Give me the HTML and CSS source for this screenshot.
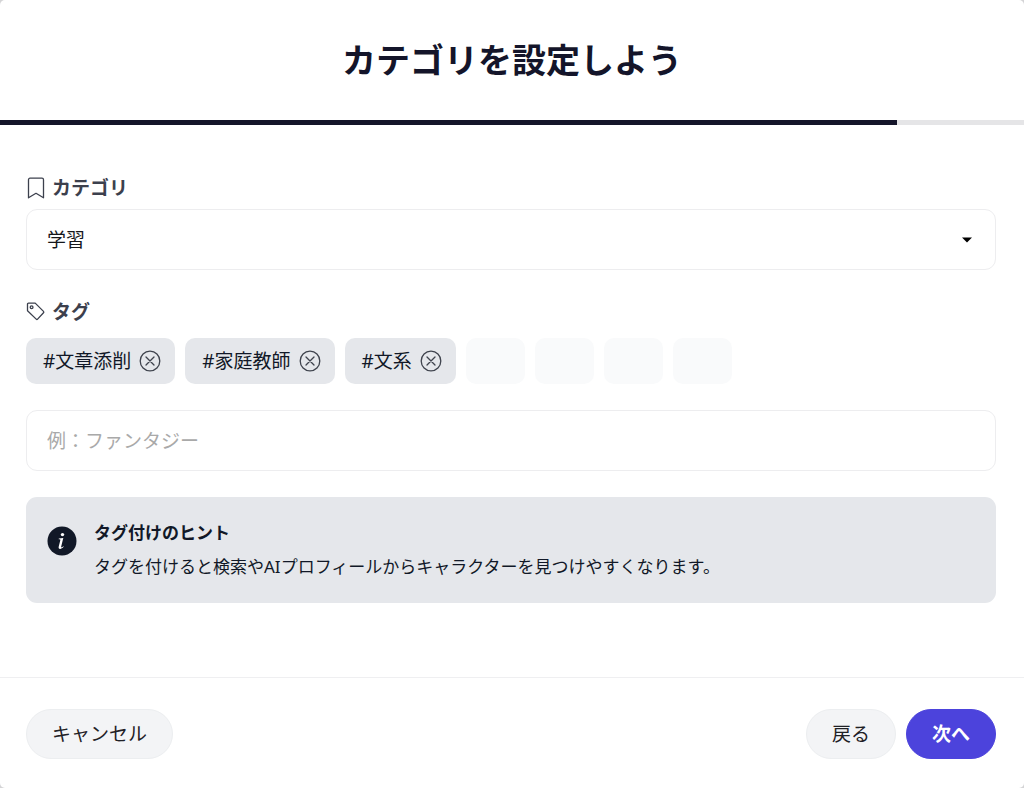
FILE: index.html
```html
<!DOCTYPE html>
<html lang="ja">
<head>
<meta charset="utf-8">
<meta name="viewport" content="width=device-width, initial-scale=1">
<title>カテゴリを設定しよう</title>
<link rel="stylesheet" href="styles.css">
</head>
<body>
<form class="dialog">
  <header class="dialog-header">
    <h1 class="title">カテゴリを設定しよう</h1>
  </header>
  <div class="progress"><div class="progress-bar"></div></div>

  <main class="content">
    <label class="label" for="category">
      <svg class="label-icon" viewBox="0 0 20 24" aria-hidden="true"><path d="M2.500 21.800V3.700a1.500 1.500 0 0 1 1.500-1.500h12a1.500 1.500 0 0 1 1.500 1.500v18.100L10 17.300z"/></svg>
      カテゴリ
    </label>
    <div class="select-wrap">
      <select class="field" id="category">
        <option>学習</option>
      </select>
      <svg class="caret" viewBox="0 0 10 6" aria-hidden="true"><path d="M0 0.500h10l-5 5z"/></svg>
    </div>

    <label class="label" for="tag">
      <svg class="label-icon" viewBox="0 0 20 24" aria-hidden="true"><path d="M1.500 4.100a1 1 0 0 1 1-1h6.700l8.300 8.300a1 1 0 0 1 0 1.400l-5.900 6.300a1 1 0 0 1-1.400 0L1.500 10.800z"/><circle cx="5.600" cy="7.200" r="1.400"/></svg>
      タグ
    </label>
    <ul class="tags">
      <li class="tag">#文章添削
        <button class="remove" type="button" aria-label="文章添削を削除"><svg class="remove-icon" viewBox="0 0 22 22" aria-hidden="true"><circle cx="11" cy="11" r="9.800"/><path d="M7 7l8 8M15 7l-8 8"/></svg></button></li>
      <li class="tag">#家庭教師
        <button class="remove" type="button" aria-label="家庭教師を削除"><svg class="remove-icon" viewBox="0 0 22 22" aria-hidden="true"><circle cx="11" cy="11" r="9.800"/><path d="M7 7l8 8M15 7l-8 8"/></svg></button></li>
      <li class="tag">#文系
        <button class="remove" type="button" aria-label="文系を削除"><svg class="remove-icon" viewBox="0 0 22 22" aria-hidden="true"><circle cx="11" cy="11" r="9.800"/><path d="M7 7l8 8M15 7l-8 8"/></svg></button></li>
      <li class="tag tag-empty"></li>
      <li class="tag tag-empty"></li>
      <li class="tag tag-empty"></li>
      <li class="tag tag-empty"></li>
    </ul>
    <input class="field" id="tag" type="text" placeholder="例：ファンタジー">

    <section class="hint">
      <svg class="hint-icon" viewBox="0 0 30 30" aria-hidden="true"><circle class="disc" cx="15" cy="15" r="14.500"/><circle class="mark" cx="15.500" cy="8.600" r="1.700"/><path class="mark" d="M11.800 12.500l4.500-.6-2.100 8.700c-.2.800.2 1 .8.700l1.400-1 .3.500c-1.300 1.400-2.500 2.100-3.600 2.100-1.300 0-1.700-.9-1.400-2.200l1.600-6.500c.2-.8-.1-1-1.600-1z"/></svg>
      <div class="hint-body">
        <h2 class="hint-title">タグ付けのヒント</h2>
        <p class="hint-text">タグを付けると検索やAIプロフィールからキャラクターを見つけやすくなります。</p>
      </div>
    </section>
  </main>

  <footer class="footer">
    <button class="button" type="button">キャンセル</button>
    <div class="actions">
      <button class="button" type="button">戻る</button>
      <button class="button button-primary" type="submit">次へ</button>
    </div>
  </footer>
</form>
</body>
</html>
```

FILE: styles.css
```css
* {
  box-sizing: border-box;
}

body {
  margin: 0;
  background: #d4d4d6;
  color: #111827;
  font-family: "Noto Sans", "Noto Sans CJK JP", sans-serif;
  font-size: 19px;
  line-height: 28px;
}

.dialog {
  display: flex;
  flex-direction: column;
  min-height: 100vh;
  border-radius: 5px;
  background: #fff;
}

.dialog-header {
  padding: 36px 28px;
}

.title {
  margin: 0;
  color: #14152a;
  font-size: 34px;
  font-weight: 700;
  line-height: 48px;
  text-align: center;
}

.progress {
  height: 5px;
  background: #e5e5e7;
}

.progress-bar {
  width: 87.6%;
  height: 100%;
  background: #14152a;
}

.content {
  display: flex;
  flex: 1;
  flex-direction: column;
  padding: 49px 28px 24px 26px;
}

.label {
  display: flex;
  align-items: center;
  gap: 6px;
  margin-bottom: 7px;
  color: #3c404d;
  font-weight: 700;
}

.label-icon {
  width: 20px;
  height: 24px;
  fill: none;
  stroke: #3c404d;
  stroke-width: 1.3;
  stroke-linejoin: round;
}

.select-wrap {
  position: relative;
  margin-bottom: 28px;
}

.field {
  display: block;
  width: 100%;
  height: 61px;
  padding: 0 20px;
  border: 1px solid #ededef;
  border-radius: 11px;
  appearance: none;
  background: #fff;
  color: #15171c;
  font: inherit;
}

.field::placeholder {
  color: #a9a9a9;
  opacity: 1;
}

.caret {
  position: absolute;
  top: 28px;
  right: 24px;
  width: 10px;
  height: 6px;
  pointer-events: none;
}

.tags {
  display: flex;
  flex-wrap: wrap;
  gap: 10px;
  margin: 5px 0 26px;
  padding: 0;
  list-style: none;
}

.tag {
  display: flex;
  align-items: center;
  gap: 8px;
  height: 46px;
  padding: 0 14px 0 17px;
  border-radius: 10px;
  background: #e5e7eb;
}

.tag-empty {
  width: 59px;
  background: #f9fafb;
}

.remove {
  display: flex;
  padding: 0;
  border: 0;
  background: none;
}

.remove-icon {
  width: 22px;
  height: 22px;
  fill: none;
  stroke: #3f434d;
  stroke-width: 1.3;
  stroke-linecap: round;
}

.hint {
  display: flex;
  gap: 17px;
  margin-top: 26px;
  padding: 19px 21px;
  border-radius: 11px;
  background: #e5e7eb;
  font-size: 17px;
  line-height: 34px;
}

.hint-icon {
  flex: none;
  width: 30px;
  height: 30px;
  margin-top: 10px;
}

.disc {
  fill: #111827;
}

.mark {
  fill: #fff;
}

.hint-title,
.hint-text {
  margin: 0;
  font-size: inherit;
}

.footer {
  display: flex;
  align-items: center;
  justify-content: space-between;
  padding: 31px 28px 29px 26px;
  border-top: 1px solid #efeff1;
}

.actions {
  display: flex;
  gap: 10px;
}

.button {
  height: 50px;
  padding: 0 25px;
  border: 1px solid #eceef0;
  border-radius: 25px;
  background: #f3f4f6;
  color: #1f2126;
  font: inherit;
}

.button-primary {
  border-color: #4c43dc;
  background: #4c43dc;
  color: #fff;
  font-weight: 700;
}
```
